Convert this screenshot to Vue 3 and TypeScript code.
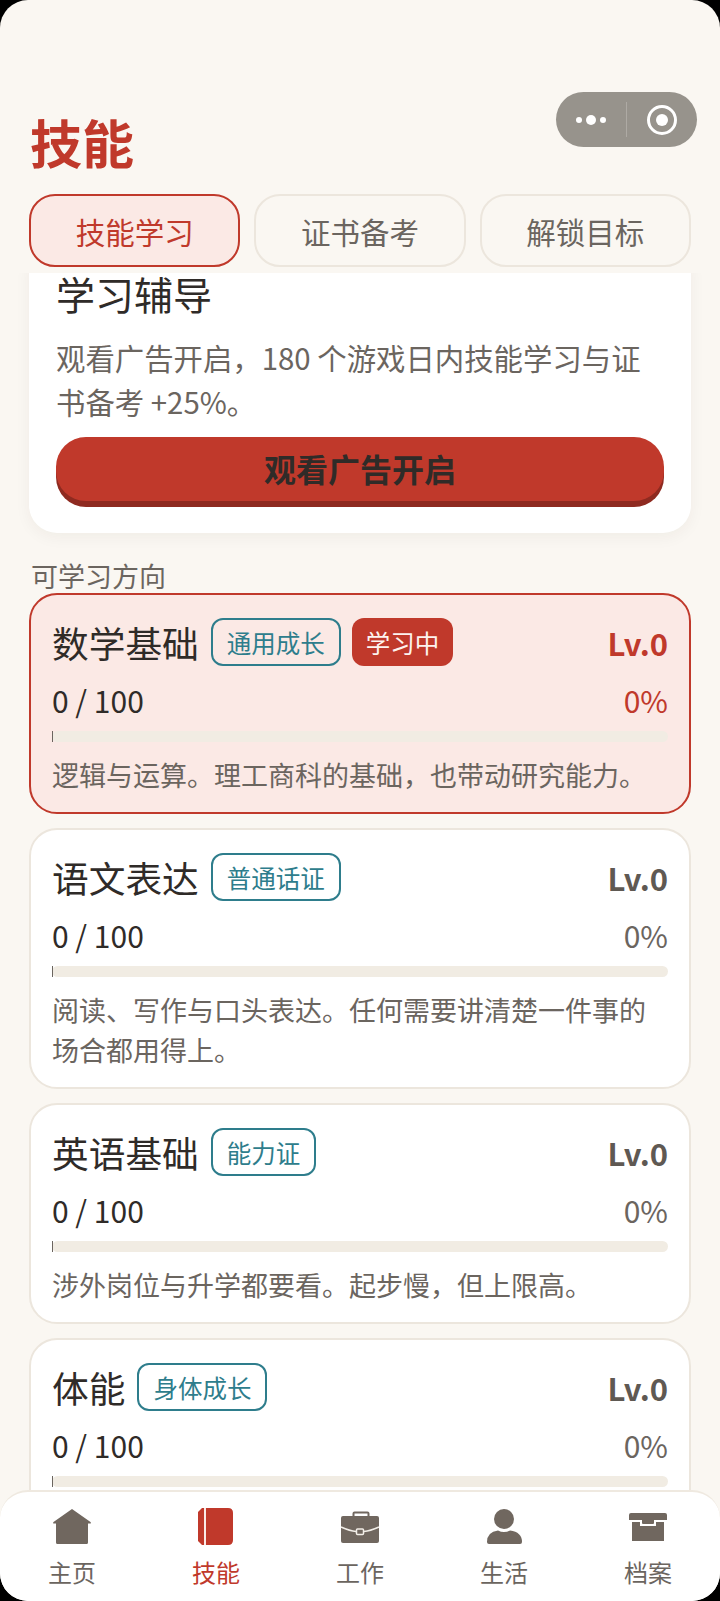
<template>
  <div class="page">
    <div class="header">
      <h1 class="title">技能</h1>
      <div class="capsule">
        <div class="capsule-dots"><i></i><b></b><i></i></div>
        <div class="capsule-line"></div>
        <div class="capsule-target"><span></span></div>
      </div>
      <div class="tabs">
        <div v-for="(t, i) in tabs" :key="t" class="tab" :class="{ active: i === 0 }">{{ t }}</div>
      </div>
    </div>

    <div ref="scroller" class="scroller">
      <div class="tutor">
        <h2>学习辅导</h2>
        <p>观看广告开启，180 个游戏日内技能学习与证书备考 +25%。</p>
        <button class="ad-btn">观看广告开启</button>
      </div>

      <div class="section-label">可学习方向</div>

      <div class="skills">
        <div v-for="s in skills" :key="s.name" class="skill" :class="{ current: s.studying }">
          <div class="skill-top">
            <span class="skill-name">{{ s.name }}</span>
            <span class="tag">{{ s.tag }}</span>
            <span v-if="s.studying" class="badge">学习中</span>
            <span class="level">Lv.{{ s.level }}</span>
          </div>
          <div class="skill-progress">
            <span>{{ s.xp }} / 100</span>
            <span class="pct">{{ s.xp }}%</span>
          </div>
          <div class="bar">
            <div class="bar-fill" :style="{ width: s.xp + '%' }"></div>
          </div>
          <p class="skill-desc">{{ s.desc }}</p>
        </div>
      </div>
    </div>

    <div class="nav">
      <div v-for="n in nav" :key="n.label" class="nav-item" :class="{ active: n.label === '技能' }">
        <svg v-if="n.icon === 'home'" width="40" height="40" viewBox="0 0 40 40">
          <path d="M20 2 L38.5 15 Q39.5 16.500 38 16.500 L36 16.500 L36 35.500 Q36 37 34.500 37 L5.500 37 Q4 37 4 35.500 L4 16.500 L2 16.500 Q0.500 16.500 1.500 15 Z" fill="#70675f" />
        </svg>
        <svg v-else-if="n.icon === 'book'" width="40" height="40" viewBox="0 0 40 40">
          <path d="M6 1 L32 1 Q37 1 37 6 L37 33 Q37 38 32 38 L6 38 L2 34 L2 5 Z" fill="#c0392b" />
          <rect x="8" y="1" width="2" height="37" fill="#fbeae6" />
        </svg>
        <svg v-else-if="n.icon === 'work'" width="40" height="40" viewBox="0 0 40 40">
          <path d="M13.500 9 L13.500 6.500 Q13.500 5.500 14.500 5.500 L27.500 5.500 Q28.500 5.500 28.500 6.500 L28.500 9" fill="none" stroke="#70675f" stroke-width="2" />
          <path d="M3 9 L37 9 Q39 9 39 11 L39 34 Q39 36 37 36 L3 36 Q1 36 1 34 L1 11 Q1 9 3 9 Z" fill="#70675f" />
          <path d="M1 20 Q10 24 16 24.500 M24 24.500 Q30 24 39 20" fill="none" stroke="#f2eee8" stroke-width="1.500" />
          <rect x="16.500" y="22" width="7" height="5.500" rx="1" fill="#70675f" stroke="#f2eee8" stroke-width="1.500" />
        </svg>
        <svg v-else-if="n.icon === 'life'" width="40" height="40" viewBox="0 0 40 40">
          <ellipse cx="20" cy="12" rx="10" ry="10" fill="#70675f" />
          <path d="M3 35 Q3 25 14 23.500 Q20 26.500 26 23.500 Q38 25 38 35 Q38 37 36 37 L5 37 Q3 37 3 35 Z" fill="#70675f" />
        </svg>
        <svg v-else width="40" height="40" viewBox="0 0 40 40">
          <path d="M3 6 L37 6 Q39 6 39 8 L39 13 L26 13 L26 16 Q26 17 25 17 L15 17 Q14 17 14 16 L14 13 L1 13 L1 8 Q1 6 3 6 Z" fill="#70675f" />
          <path d="M4 15 L12 15 L12 19 L28 19 L28 15 L36 15 L36 34 L4 34 Z" fill="#70675f" />
        </svg>
        <span class="nav-label">{{ n.label }}</span>
      </div>
    </div>
  </div>
</template>

<script setup lang="ts">
import { ref, onMounted } from 'vue';

interface Skill {
  name: string;
  tag: string;
  level: number;
  xp: number;
  desc: string;
  studying?: boolean;
}

const tabs = ['技能学习', '证书备考', '解锁目标'];

const skills: Skill[] = [
  { name: '数学基础', tag: '通用成长', level: 0, xp: 0, studying: true, desc: '逻辑与运算。理工商科的基础，也带动研究能力。' },
  { name: '语文表达', tag: '普通话证', level: 0, xp: 0, desc: '阅读、写作与口头表达。任何需要讲清楚一件事的场合都用得上。' },
  { name: '英语基础', tag: '能力证', level: 0, xp: 0, desc: '涉外岗位与升学都要看。起步慢，但上限高。' },
  { name: '体能', tag: '身体成长', level: 0, xp: 0, desc: '身体是一切的本钱。' },
];

const nav = [
  { label: '主页', icon: 'home' },
  { label: '技能', icon: 'book' },
  { label: '工作', icon: 'work' },
  { label: '生活', icon: 'life' },
  { label: '档案', icon: 'box' },
];

const scroller = ref<HTMLElement | null>(null);

onMounted(() => {
  if (scroller.value) scroller.value.scrollTop = 28;
});
</script>

<style>
html,
body {
  margin: 0;
  background: #000;
}
</style>

<style scoped>
.page {
  position: relative;
  width: 720px;
  height: 1601px;
  display: flex;
  flex-direction: column;
  overflow: hidden;
  border-radius: 28px;
  background: #faf7f2;
  color: #2f2b28;
  font-family: "Noto Sans CJK SC", "Noto Sans", sans-serif;
}

.header {
  padding: 110px 29px 0;
}

.title {
  margin: 0 0 0 1px;
  font-size: 52px;
  line-height: 64px;
  font-weight: 700;
  color: #c0392b;
}

.capsule {
  position: absolute;
  top: 92px;
  left: 556px;
  width: 141px;
  height: 55px;
  display: flex;
  align-items: center;
  border-radius: 28px;
  background: #97938c;
}

.capsule-dots {
  width: 70px;
  display: flex;
  align-items: center;
  justify-content: center;
  gap: 4px;
}

.capsule-dots i {
  width: 6px;
  height: 6px;
  border-radius: 50%;
  background: #fff;
}

.capsule-dots b {
  width: 10px;
  height: 10px;
  border-radius: 50%;
  background: #fff;
}

.capsule-line {
  width: 1px;
  height: 35px;
  background: #aeaaa4;
}

.capsule-target {
  flex: 1;
  display: flex;
  justify-content: center;
}

.capsule-target span {
  width: 30px;
  height: 30px;
  box-sizing: border-box;
  border: 3px solid #fff;
  border-radius: 50%;
  display: flex;
  align-items: center;
  justify-content: center;
}

.capsule-target span::after {
  content: "";
  width: 12px;
  height: 12px;
  border-radius: 50%;
  background: #fff;
}

.tabs {
  margin-top: 20px;
  display: grid;
  grid-template-columns: repeat(3, 1fr);
  gap: 14px;
}

.tab {
  height: 73px;
  box-sizing: border-box;
  border: 2px solid #ece6dd;
  border-radius: 26px;
  display: flex;
  align-items: center;
  justify-content: center;
  font-size: 29.500px;
  color: #6b655f;
}

.tab.active {
  border-color: #c0392b;
  background: #fbe9e5;
  color: #c0392b;
}

.scroller {
  flex: 1;
  margin-top: 6px;
  padding: 0 29px 140px;
  overflow: hidden;
}

.tutor {
  padding: 28px 27px 26px;
  border-radius: 28px;
  background: #fff;
  box-shadow: 0 4px 16px rgba(60, 40, 20, 0.05);
}

.tutor h2 {
  margin: 0;
  font-size: 39px;
  line-height: 40px;
  font-weight: 400;
}

.tutor p {
  margin: 22px 0 0;
  font-size: 29.400px;
  line-height: 44px;
  color: #6b655f;
}

.ad-btn {
  display: block;
  width: 100%;
  height: 64px;
  margin: 14px 0 6px;
  padding: 0 0 2px;
  border: 0;
  border-radius: 30px;
  background: #c0392b;
  box-shadow: 0 6px 0 #8e2a20;
  font-family: inherit;
  font-size: 32px;
  font-weight: 700;
  color: #2f2b28;
}

.section-label {
  margin: 26px 0 0 2px;
  font-size: 27px;
  line-height: 34px;
  color: #6b655f;
}

.skills {
  display: flex;
  flex-direction: column;
  gap: 14px;
}

.skill {
  padding: 23px 21px 17px;
  border: 2px solid #ece6dd;
  border-radius: 28px;
  background: #fff;
}

.skill.current {
  border-color: #c0392b;
  background: #fbe9e5;
}

.skill-top {
  display: flex;
  align-items: center;
  height: 48px;
}

.skill-name {
  font-size: 36.700px;
  line-height: 48px;
  margin-right: 12px;
}

.tag,
.badge {
  height: 48px;
  box-sizing: border-box;
  padding: 0 14px;
  border-radius: 12px;
  display: flex;
  align-items: center;
  font-size: 24.500px;
}

.tag {
  border: 2px solid #2e7d8c;
  color: #2e7d8c;
}

.badge {
  margin-left: 11px;
  background: #c0392b;
  color: #fdf3ef;
}

.level {
  margin-left: auto;
  font-size: 31px;
  font-weight: 700;
  color: #5f5953;
}

.skill.current .level,
.skill.current .pct {
  color: #c0392b;
}

.skill-progress {
  margin-top: 14px;
  display: flex;
  justify-content: space-between;
  font-size: 30px;
  line-height: 40px;
}

.pct {
  color: #6b655f;
}

.bar {
  height: 11px;
  margin-top: 11px;
  border-radius: 6px;
  background: #f1ece3;
}

.bar-fill {
  height: 100%;
  min-width: 1px;
  background: #6b655f;
}

.skill-desc {
  margin: 13px 0 0;
  font-size: 27px;
  line-height: 40px;
  color: #6b655f;
}

.nav {
  position: absolute;
  left: 0;
  right: 0;
  top: 1490px;
  bottom: 0;
  box-sizing: border-box;
  padding-top: 15px;
  display: grid;
  grid-template-columns: repeat(5, 1fr);
  border-top: 2px solid #efe9e0;
  border-radius: 28px 28px 0 0;
  background: #fff;
}

.nav-item {
  display: flex;
  flex-direction: column;
  align-items: center;
  gap: 8px;
  color: #6b655f;
}

.nav-item.active {
  color: #c0392b;
}

.nav-label {
  font-size: 24px;
  line-height: 34px;
}
</style>
